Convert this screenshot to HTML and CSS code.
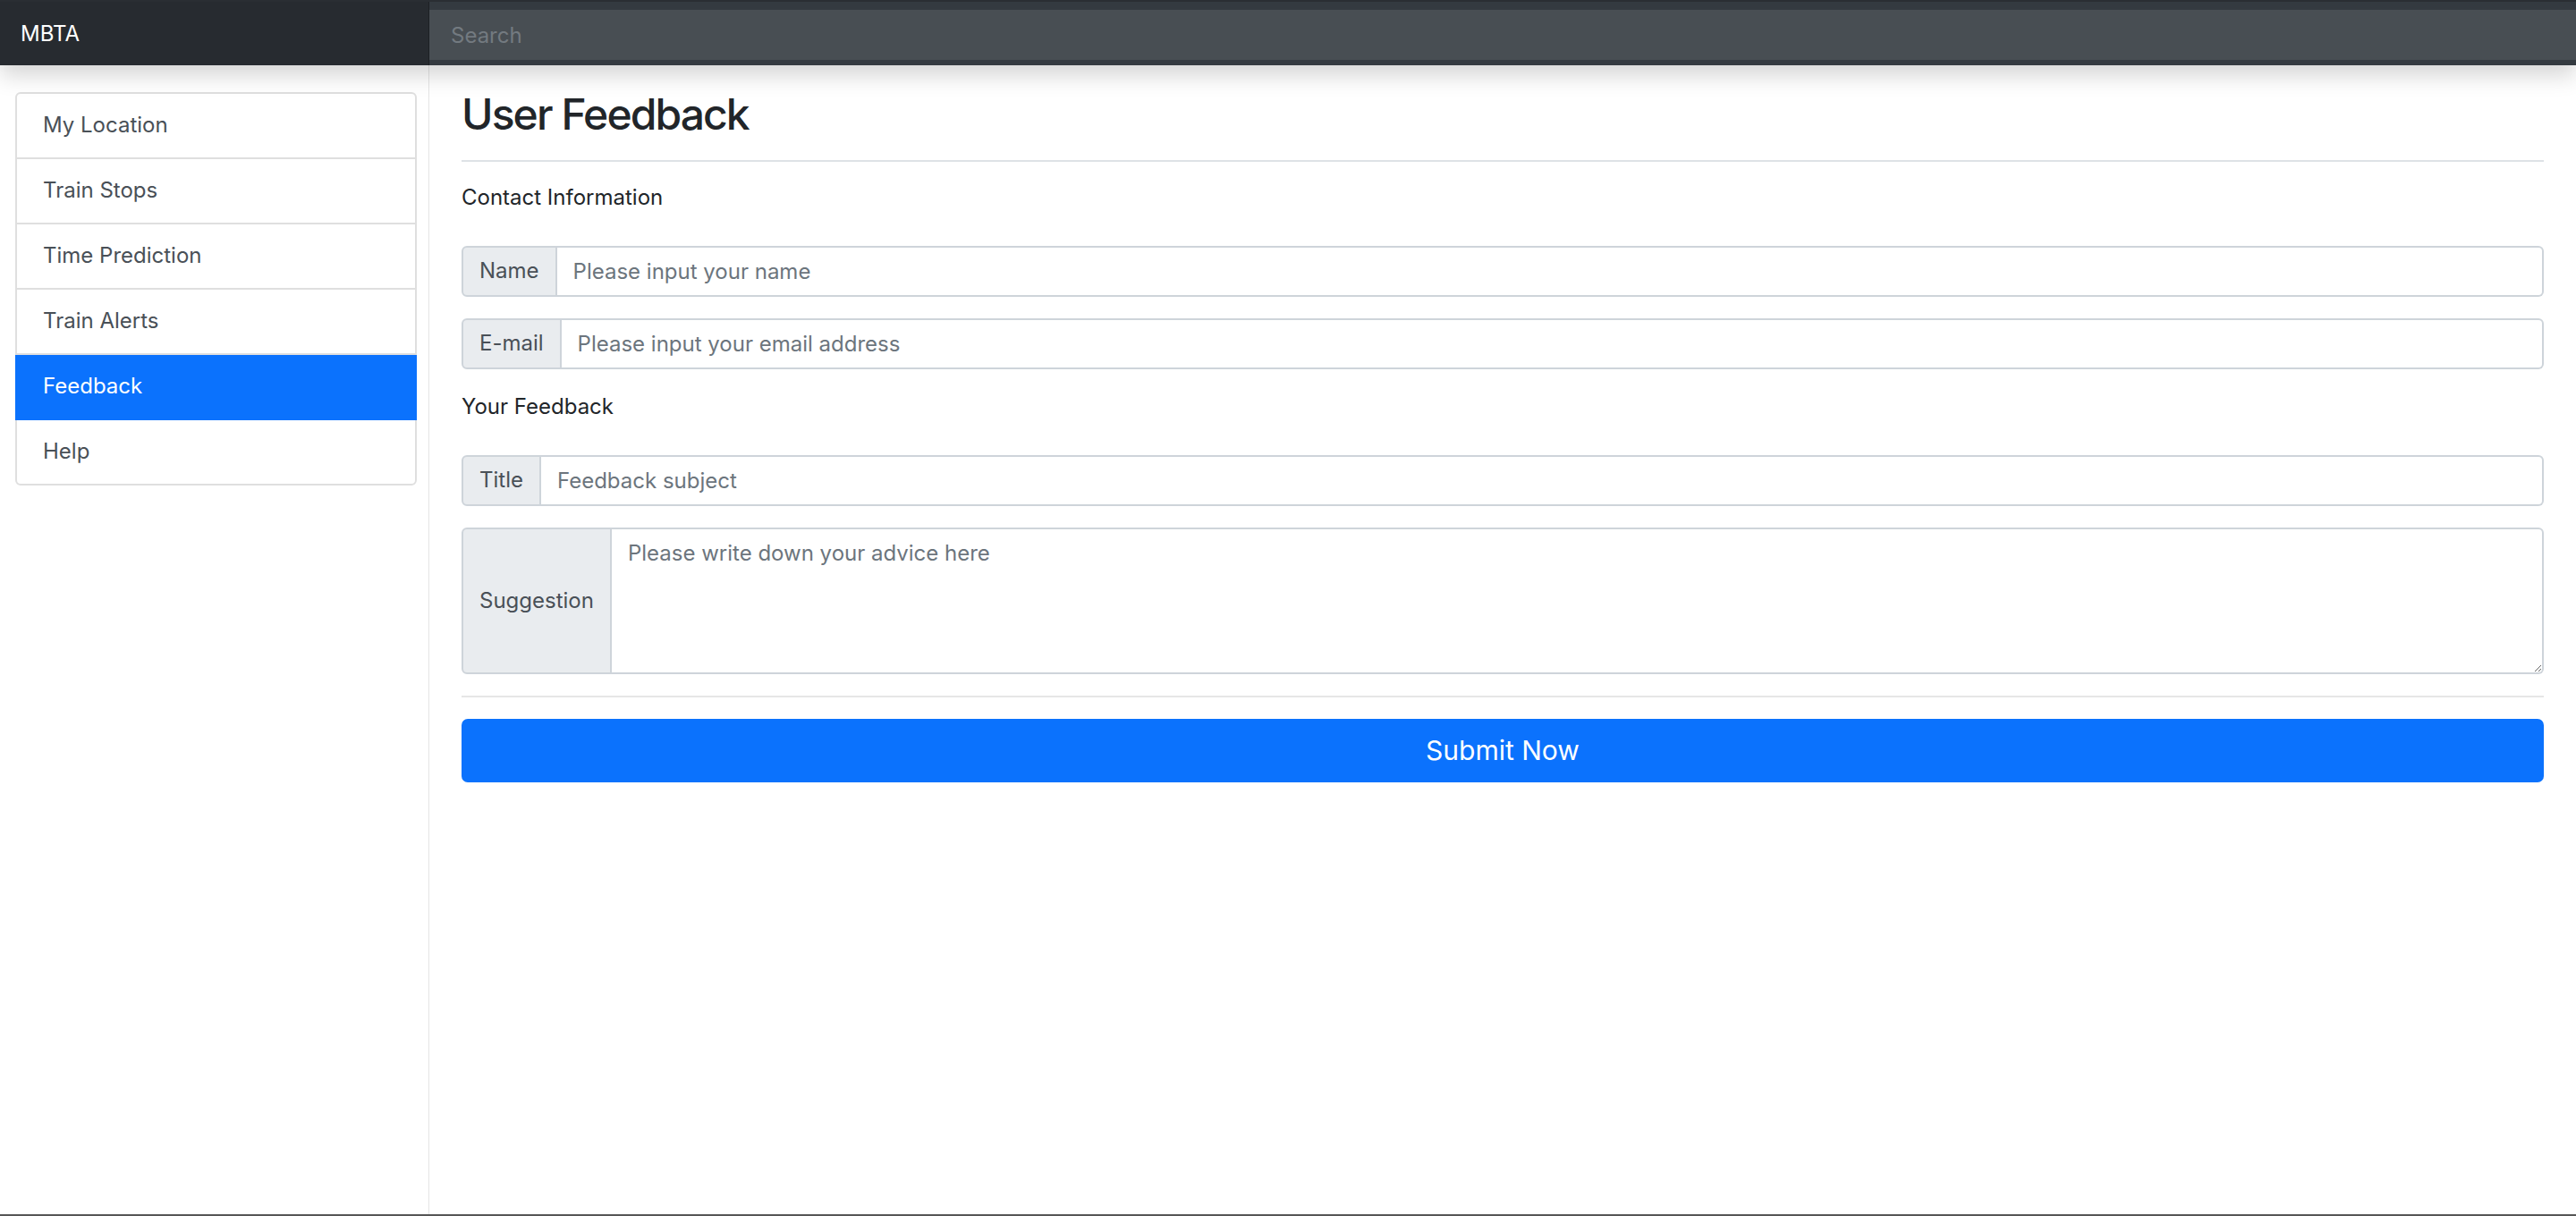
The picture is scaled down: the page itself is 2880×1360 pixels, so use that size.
FILE: index.html
```html
<!DOCTYPE html>
<html lang="en">
<head>
<meta charset="utf-8">
<title>MBTA - User Feedback</title>
<link rel="stylesheet" href="styles.css">
</head>
<body>
<div class="app">
  <header class="navbar">
    <a class="brand" href="#">MBTA</a>
    <input class="search" type="text" placeholder="Search" aria-label="Search">
  </header>
  <div class="layout">
    <nav class="sidebar">
      <div class="list">
        <a class="item" href="#">My Location</a>
        <a class="item" href="#">Train Stops</a>
        <a class="item" href="#">Time Prediction</a>
        <a class="item" href="#">Train Alerts</a>
        <a class="item active" href="#">Feedback</a>
        <a class="item" href="#">Help</a>
      </div>
    </nav>
    <main class="main">
      <div class="page-header">
        <h2 class="title">User Feedback</h2>
      </div>
      <form class="form">
        <p class="section">Contact Information</p>
        <div class="group">
          <span class="addon">Name</span>
          <input class="control" type="text" placeholder="Please input your name">
        </div>
        <div class="group">
          <span class="addon">E-mail</span>
          <input class="control" type="email" placeholder="Please input your email address">
        </div>
        <p class="section">Your Feedback</p>
        <div class="group">
          <span class="addon">Title</span>
          <input class="control" type="text" placeholder="Feedback subject">
        </div>
        <div class="group group-area">
          <span class="addon">Suggestion</span>
          <textarea class="control area" placeholder="Please write down your advice here"></textarea>
        </div>
        <hr class="rule">
        <button class="submit" type="button">Submit Now</button>
      </form>
    </main>
  </div>
</div>
</body>
</html>
```

FILE: styles.css
```css
* { box-sizing: border-box; }

html, body {
  margin: 0;
  padding: 0;
  background: #fff;
}

body {
  font-family: Inter, "Liberation Sans", "Noto Sans", sans-serif;
  font-size: 24px;
  line-height: 1.5;
  color: #212529;
}

.app {
  height: 1360px;
  display: flex;
  flex-direction: column;
  border-bottom: 2px solid #565656;
  overflow: hidden;
}

/* ---------- top navbar ---------- */
.navbar {
  position: relative;
  z-index: 10;
  flex: 0 0 73px;
  display: flex;
  align-items: flex-start;
  background: #343a40;
  border-top: 2px solid #2a2e33;
  box-shadow: 0 12px 24px rgba(0, 0, 0, 0.16);
}

.brand {
  width: 480px;
  height: 71px;
  display: flex;
  align-items: center;
  padding-left: 23px;
  color: #fff;
  text-decoration: none;
  font-size: 24px;
  background: rgba(0, 0, 0, 0.25);
  box-shadow: inset -1px 0 0 rgba(0, 0, 0, 0.25);
}

.search {
  flex: 1;
  height: 56px;
  margin-top: 9px;
  border: 0;
  border-radius: 0;
  padding: 0 24px;
  font: inherit;
  color: #fff;
  background: rgba(255, 255, 255, 0.1);
  outline: none;
}

.search::placeholder { color: #737a80; }

/* ---------- layout ---------- */
.layout {
  flex: 1;
  display: flex;
  min-height: 0;
}

.sidebar {
  flex: 0 0 480px;
  padding: 30px 14px 0 17px;
  box-shadow: inset -1px 0 0 rgba(0, 0, 0, 0.1);
}

.list {
  display: flex;
  flex-direction: column;
  border: 2px solid #dfdfdf;
  border-radius: 6px;
}

.item {
  height: 73px;
  display: flex;
  align-items: center;
  padding-left: 29px;
  padding-bottom: 2px;
  color: #495057;
  text-decoration: none;
  border-bottom: 2px solid #dfdfdf;
}

.item:last-child { border-bottom: 0; height: 71px; }

.item.active {
  margin: 0 -2px;
  padding-left: 31px;
  color: #fff;
  background: #0b72fd;
  border-bottom-color: #0b72fd;
}

/* ---------- main ---------- */
.main {
  flex: 1;
  padding: 0 36px;
}

.page-header {
  padding: 26px 0 10px;
  margin-bottom: 22px;
  border-bottom: 2px solid #dee2e6;
}

.title {
  margin: 0 0 12px;
  font-size: 48px;
  line-height: 1.2;
  font-weight: 500;
  letter-spacing: -1.9px;
  color: #212529;
}

.form { margin: 0; }

.section {
  margin: 0 0 36px;
  color: #212529;
}

.group {
  display: flex;
  height: 57px;
  margin-bottom: 24px;
}

.group-area { height: 164px; }

.addon {
  display: flex;
  align-items: center;
  padding: 0 18px;
  color: #495057;
  background: #e9ecef;
  border: 2px solid #ced4da;
  border-radius: 6px 0 0 6px;
  white-space: nowrap;
}

.control {
  flex: 1;
  min-width: 0;
  height: 100%;
  padding: 0 18px;
  font: inherit;
  color: #495057;
  background: #fff;
  border: 2px solid #ced4da;
  border-left: 0;
  border-radius: 0 6px 6px 0;
  outline: none;
}

.control::placeholder { color: #6c757d; }

.area {
  padding: 9px 18px;
  line-height: 1.5;
}

.rule {
  margin: 24px 0;
  border: 0;
  border-top: 2px solid #e6e6e6;
}

.submit {
  display: block;
  width: 100%;
  height: 71px;
  border: 0;
  border-radius: 7px;
  background: #0b72fd;
  color: #fff;
  font-family: inherit;
  font-size: 30px;
  line-height: 1.5;
  cursor: pointer;
}
```
